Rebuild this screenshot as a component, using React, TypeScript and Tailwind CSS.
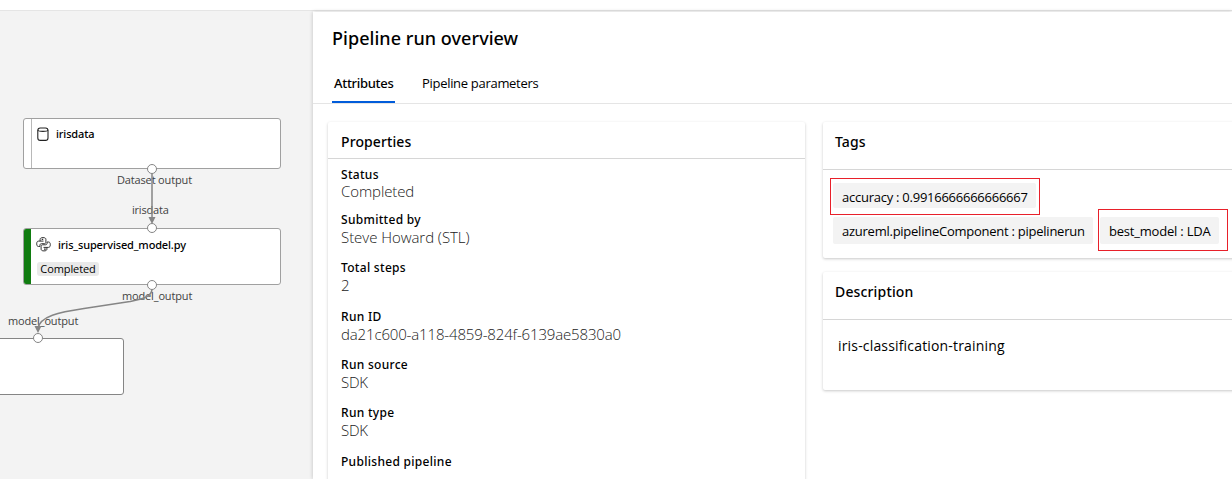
import type { ReactNode } from "react";

const properties = [
  { label: "Status", value: "Completed", box: "h-[45px]", track: "-mt-px tracking-[-0.1px]" },
  { label: "Submitted by", value: "Steve Howard (STL)", box: "h-[48px]", track: "tracking-[-0.05px]" },
  { label: "Total steps", value: "2", box: "h-[49px]", track: "" },
  { label: "Run ID", value: "da21c600-a118-4859-824f-6139ae5830a0", box: "h-[48px]", track: "tracking-[-0.15px]" },
  { label: "Run source", value: "SDK", box: "h-[48px]", track: "tracking-[-0.2px]" },
  { label: "Run type", value: "SDK", box: "h-[49px]", track: "tracking-[-0.2px]" },
  { label: "Published pipeline", value: "", box: "h-[48px]", track: "" },
];

function DatabaseIcon() {
  return (
    <svg width="12" height="15" viewBox="0 0 12 15" fill="none" stroke="#222" strokeWidth="1.1">
      <rect x="0.8" y="1" width="10.200" height="12.400" rx="2.500" />
      <path d="M.8 3.200c1 1.500 9.200 1.500 10.200 0" />
    </svg>
  );
}

function PythonIcon() {
  return (
    <svg width="15" height="15" viewBox="0 0 15 15" fill="none" stroke="#333" strokeWidth="1">
      <path d="M7.500 4.100H2.600C1.200 4.100.700 5.200.700 6.800s.5 2.700 1.900 2.700h1.300V8.300c0-1 .6-1.600 1.600-1.600h2.800c1 0 1.600-.6 1.600-1.600V2.400C9.900 1.200 9 .6 7 .6s-2.900.6-2.900 1.800v1.700" />
      <path d="M7.500 10.400h4.900c1.400 0 1.900-1.100 1.900-2.700S13.800 5 12.400 5h-1.300v1.200c0 1-.6 1.600-1.600 1.600H6.700c-1 0-1.600.6-1.600 1.600v2.700c0 1.200.9 1.800 2.900 1.800s2.900-.6 2.900-1.800v-1.700" />
      <path d="M5.700 2.300h1.500M8 12.100h1.800" strokeWidth="1.300" />
    </svg>
  );
}

function Port({ className }: { className: string }) {
  return <span className={`absolute size-[10px] rounded-full border border-[#858585] bg-white ${className}`} />;
}

function Canvas() {
  return (
    <section className="relative w-[313px] shrink-0 overflow-hidden bg-[#f3f3f3] text-[11px] leading-4 text-[#424242]">
      <div className="absolute left-[23px] top-[107px] flex h-[51px] w-[258px] overflow-hidden rounded-[3px] border border-[#a0a0a0] bg-white">
        <div className="w-2 border-r border-[#b8b8b8]" />
        <div className="flex h-[30px] items-center gap-[7px] pl-[5px] text-black">
          <DatabaseIcon />
          <span className="font-['Noto_Sans'] font-medium tracking-[-0.15px]">irisdata</span>
        </div>
      </div>
      <div className="absolute left-[23px] top-[217px] flex h-[57px] w-[258px] overflow-hidden rounded-[3px] border border-[#a0a0a0] bg-white">
        <div className="w-[7px] bg-[#107c10]" />
        <div className="pl-[6px] text-black">
          <div className="-ml-px flex h-[33px] items-start gap-[7px]">
            <div className="pt-2"><PythonIcon /></div>
            <span className="pt-2 font-['Noto_Sans'] font-medium tracking-[-0.15px]">iris_supervised_model.py</span>
          </div>
          <span className="flex h-[14px] w-[62px] items-center justify-center rounded-[3px] bg-[#e9e9e9] tracking-[-0.1px]">Completed</span>
        </div>
      </div>
      <div className="absolute left-[-10px] top-[327px] h-[57px] w-[134px] rounded-[3px] border border-[#858585] bg-white" />
      <span className="absolute left-[117px] top-[161px] whitespace-nowrap tracking-[-0.15px]">Dataset output</span>
      <span className="absolute left-[132px] top-[191px] whitespace-nowrap tracking-[-0.2px]">irisdata</span>
      <span className="absolute left-[122px] top-[277px] whitespace-nowrap tracking-[-0.15px]">model_output</span>
      <span className="absolute left-[8px] top-[302px] whitespace-nowrap tracking-[-0.15px]">model_output</span>
      <svg className="absolute left-0 top-0" width="312" height="468" fill="none" stroke="#858585" strokeWidth="1.5">
        <path d="M152 161V208" />
        <path d="M152 278C152 286 142 288 130 290.500L84 297.500C60 301 39 305 38 318" />
        <path d="M148.500 206h7l-3.500 7zM34.500 315h7l-3.500 7z" fill="#858585" stroke="none" />
      </svg>
      <Port className="left-[147px] top-[153px]" />
      <Port className="left-[147px] top-[212px]" />
      <Port className="left-[147px] top-[269px]" />
      <Port className="left-[33px] top-[322px]" />
    </section>
  );
}

function Card({ className, children }: { className: string; children: ReactNode }) {
  return <div className={`rounded-[2px] bg-white shadow-[0_1px_3px_rgba(0,0,0,0.22)] ${className}`}>{children}</div>;
}

export default function App() {
  return (
    <div className="flex h-[479px] w-[1232px] flex-col overflow-hidden bg-white font-['Open_Sans','Noto_Sans',sans-serif] text-black">
      <div className="h-[11px] shrink-0 border-b border-[#e5e5e5] bg-white" />
      <div className="flex min-h-0 flex-1">
        <Canvas />
        <main className="z-10 mt-px min-w-0 flex-1 overflow-hidden bg-white shadow-[0_0_4px_rgba(0,0,0,0.22)]">
          <h1 className="h-[50px] pl-[19px] pt-[14px] font-['Noto_Sans'] text-[18px] font-medium leading-6 tracking-[0.05px]">Pipeline run overview</h1>
          <nav className="flex h-[42px] border-b border-[#e5e5e5] pl-[19px] text-[13px]">
            <span className="h-[41px] w-[63px] whitespace-nowrap border-b-2 border-[#015cda] pl-[2px] pt-[11px] font-['Noto_Sans'] font-medium leading-5 tracking-[-0.3px]">Attributes</span>
            <span className="ml-[27px] whitespace-nowrap pt-[11px] leading-5 tracking-[-0.3px]">Pipeline parameters</span>
          </nav>
          <div className="flex items-start gap-[18px] pl-[15px] pt-[18px]">
            <Card className="h-[400px] w-[477px] shrink-0">
              <h2 className="h-[37px] border-b border-[#d6d6d6] pl-[13px] pt-[10px] font-['Noto_Sans'] text-[14px] font-medium leading-5 tracking-[0.1px]">Properties</h2>
              <dl className="pl-[13px] pt-[7px]">
                {properties.map((p) => (
                  <div key={p.label} className={p.box}>
                    <dt className="h-[17px] font-['Noto_Sans'] text-[12px] font-medium leading-[17px] tracking-[0.3px]">{p.label}</dt>
                    <dd className={`text-[15px] font-light leading-[18px] text-[#222] ${p.track}`}>{p.value}</dd>
                  </div>
                ))}
              </dl>
            </Card>
            <div className="flex min-w-0 flex-1 flex-col gap-[14px]">
              <Card className="h-[136px] w-[430px]">
                <h2 className="h-12 border-b border-[#d6d6d6] pl-3 pt-[10px] font-['Noto_Sans'] text-[14px] font-medium leading-5 tracking-[0.1px]">Tags</h2>
                <div className="flex flex-col items-start pl-[7px] pt-[8px] text-[13px]">
                  <div className="flex h-[37px] w-[210px] border border-[#e8202a] p-[4px_3px_6px_2px]">
                    <span className="flex-1 rounded-[2px] bg-[#f3f3f3] pl-[9px] leading-[28px] tracking-[-0.25px]">accuracy : 0.9916666666666667</span>
                  </div>
                  <div className="-mt-[6px] flex items-center">
                    <span className="ml-[3px] h-[27px] w-[260px] whitespace-nowrap rounded-[2px] bg-[#f3f3f3] pl-[9px] leading-[28px] tracking-[-0.25px]">azureml.pipelineComponent : pipelinerun</span>
                    <div className="ml-[5px] h-[42px] w-[130px] border border-[#e8202a] pl-px pt-[7px]">
                      <div className="h-[27px] w-[119px] rounded-[2px] bg-[#f3f3f3] pl-[9px] leading-[28px] tracking-[-0.2px]">best_model : LDA</div>
                    </div>
                  </div>
                </div>
              </Card>
              <Card className="h-[118px] w-[430px]">
                <h2 className="h-12 border-b border-[#d6d6d6] pl-3 pt-[10px] font-['Noto_Sans'] text-[14px] font-medium leading-5 tracking-[0.15px]">Description</h2>
                <p className="pl-[15px] pt-4 text-[14px] leading-5 tracking-[0.17px]">iris-classification-training</p>
              </Card>
            </div>
          </div>
        </main>
      </div>
    </div>
  );
}
